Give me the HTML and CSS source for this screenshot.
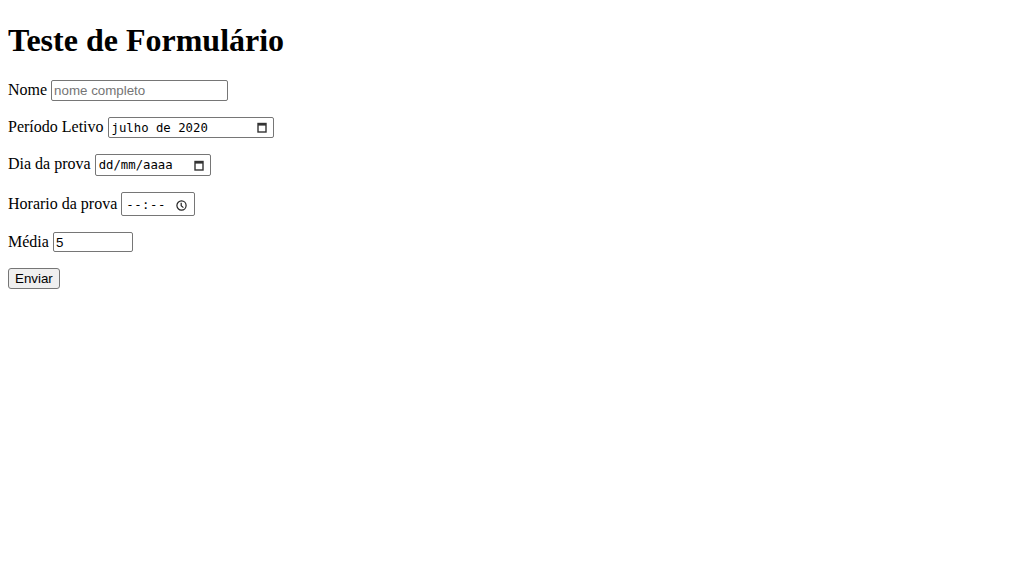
FILE: index.html
```html
<!DOCTYPE html>
<html lang="pt-BR">
<head>
<meta charset="utf-8">
<title>Teste de Formulário</title>
<link rel="stylesheet" href="styles.css">
</head>
<body>
<h1 class="title">Teste de Formulário</h1>
<form class="form">
<p class="row"><label for="nome">Nome</label> <input class="field text nome" type="text" id="nome" placeholder="nome completo"></p>
<p class="row"><label>Período Letivo</label> <span class="field picker month"><span class="val">julho de 2020</span><svg class="ico" width="10" height="11" viewBox="0 0 10 11"><rect x="1" y="1.5" width="8" height="8.5" fill="none" stroke="#333" stroke-width="1.4"/><rect x="1" y="1" width="8" height="2.6" fill="#333"/></svg></span></p>
<p class="row"><label>Dia da prova</label> <span class="field picker date"><span class="val">dd/mm/aaaa</span><svg class="ico" width="10" height="11" viewBox="0 0 10 11"><rect x="1" y="1.5" width="8" height="8.5" fill="none" stroke="#333" stroke-width="1.4"/><rect x="1" y="1" width="8" height="2.6" fill="#333"/></svg></span></p>
<p class="row"><label>Horario da prova</label> <span class="field picker time"><span class="val">--:--</span><svg class="ico" width="11" height="11" viewBox="0 0 11 11"><circle cx="5.5" cy="5.5" r="4.6" fill="none" stroke="#222" stroke-width="1.2"/><path d="M5.2 2.8V5.8L7.4 7.6" fill="none" stroke="#222" stroke-width="1.2"/></svg></span></p>
<p class="row"><label for="media">Média</label> <input class="field text media" type="text" id="media" value="5"></p>
<p class="row"><button class="btn" type="submit">Enviar</button></p>
</form>
</body>
</html>
```

FILE: styles.css
```css
body {
  margin: 8px;
  font-family: "Liberation Serif", "Times New Roman", serif;
  font-size: 16px;
  color: #000;
  background: #fff;
}
.title {
  font-size: 32px;
  font-weight: bold;
  margin: 14px 0 21px;
}
.row {
  margin: 16px 0;
}
.field {
  box-sizing: border-box;
  font-size: 13.33px;
  border: 1px solid #767676;
  border-radius: 2px;
  padding: 1px 2px;
  background: #fff;
  color: #000;
}
.text {
  font-family: "Liberation Sans", Arial, sans-serif;
  height: 21px;
}
.text::placeholder {
  color: #757575;
}
.nome {
  width: 177px;
}
.media {
  width: 80px;
  height: 20px;
}
.picker {
  display: inline-flex;
  align-items: center;
  justify-content: space-between;
  vertical-align: baseline;
  font-family: "DejaVu Sans Mono", "Liberation Mono", monospace;
  font-size: 12.3px;
  padding: 0 6px 0 3px;
  height: 21px;
}
.month {
  width: 166px;
}
.date {
  width: 116px;
  height: 22px;
}
.time {
  width: 74px;
  height: 24px;
  padding: 2px 7px 0 4px;
}
.time .val {
  letter-spacing: 0.5px;
}
.ico {
  display: block;
  flex: none;
}
.btn {
  font-family: "Liberation Sans", Arial, sans-serif;
  font-size: 13.33px;
  height: 21px;
  padding: 1px 6px;
  border: 1px solid #767676;
  border-radius: 3px;
  background: #efefef;
  color: #000;
}
```
